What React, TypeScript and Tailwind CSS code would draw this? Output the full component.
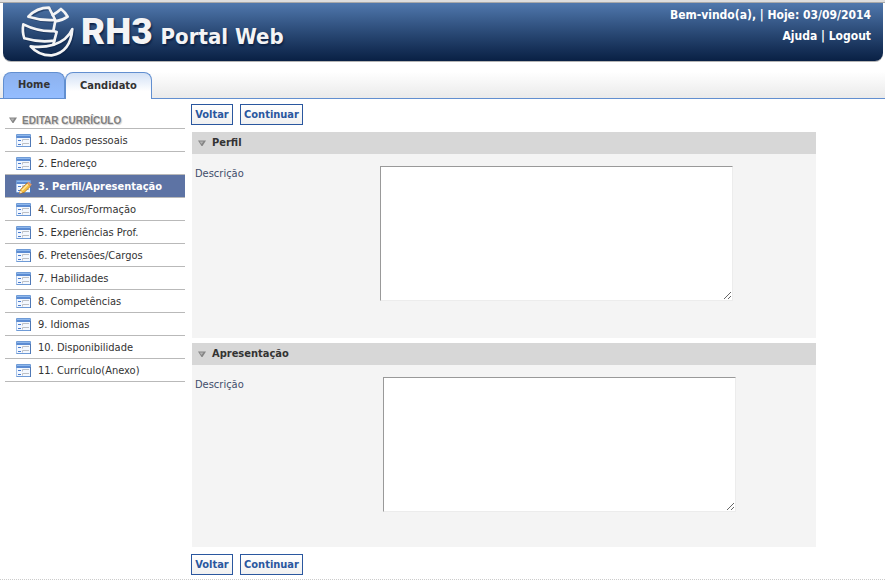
import { useState } from "react";

const sections = [
  "Dados pessoais",
  "Endereço",
  "Perfil/Apresentação",
  "Cursos/Formação",
  "Experiências Prof.",
  "Pretensões/Cargos",
  "Habilidades",
  "Competências",
  "Idiomas",
  "Disponibilidade",
  "Currículo(Anexo)",
];

function GlobeLogo() {
  return (
    <svg className="h-[58px] w-[75px] shrink-0" viewBox="0 9 225 174" fill="none" aria-hidden="true">
      <g stroke="#0b2145" strokeOpacity="0.5" strokeWidth="7" strokeLinejoin="round" transform="translate(4 4)">
        <path d="M55 50 Q80 23 117 23 L136 60 Q96 63 55 50Z" />
        <path d="M40 73 Q84 95 130 93 M40 73 Q36 95 43 115 Q86 128 133 122" />
        <path d="M187 87 Q172 121 131 134 Q98 144 62 139 Q86 167 125 166 Q182 157 187 87Z" />
      </g>
      <g stroke="#f4f4f5" strokeWidth="8" strokeLinejoin="round" strokeLinecap="round">
        <path d="M55 50 Q80 23 117 23 L136 60 Q96 63 55 50Z" />
        <path d="M128 45 Q141 38 153 27 Q165 36 173 50 Q158 61 136 64" />
        <path d="M136 62 L130 93 L140 96 L133 122 Q86 128 43 115 Q36 95 40 73 Q84 95 130 93" />
        <path d="M187 87 Q172 121 131 134 Q98 144 62 139 Q86 167 125 166 Q182 157 187 87Z" />
        <path d="M133 122 L130 134" />
      </g>
    </svg>
  );
}

function FormIcon({ editing = false }: { editing?: boolean }) {
  return (
    <svg className="h-[14px] w-4 shrink-0" viewBox="0 0 16 14" aria-hidden="true">
      <rect x="0" y="0" width="15" height="13" rx="1" fill="#6f9bd6" />
      <rect x="1" y="4" width="13" height="8" fill="#f3f8ff" />
      <rect x="0" y="4" width="1" height="8" fill="#a9c4e8" />
      <rect x="1" y="1" width="13" height="1" fill="#8fb8ec" />
      <rect x="1" y="2" width="13" height="2" fill="#5b8bd2" />
      <rect x="14" y="3" width="1" height="10" fill="#4f78b5" />
      <path d="M2 6.500h3M2 10.500h3" stroke="#4a7ccf" />
      <path d="M13 5.500H6.500v2M13 9.500H6.500v2" stroke="#bcbfc4" fill="none" />
      {editing && (
        <g>
          <path d="M3.500 13.500l1.200-4 6.500-6.500 3.500 3-6.500 6.400z" fill="#f6c143" stroke="#a86b1c" strokeWidth="0.800" />
          <path d="M6 10.200l6-6" stroke="#ffe9a3" strokeWidth="1.500" />
          <path d="M3.500 13.500l.9-2.900 2 2z" fill="#f8e2c0" />
          <path d="M11.200 3l1.300-1.300 3.300 2.900-1.200 1.400z" fill="#e79a68" />
        </g>
      )}
    </svg>
  );
}

function Arrow() {
  return (
    <svg className="h-[6px] w-2 shrink-0" viewBox="0 0 8 6" aria-hidden="true">
      <path d="M0 .5h8L4.500 6h-1z" fill="#858585" />
      <path d="M1.500 1.500h4L3.500 4z" fill="#b5b5b5" />
    </svg>
  );
}

function Actions() {
  const style =
    "h-[21px] border border-[#2a579f] bg-linear-to-b from-white to-[#f0f0f0] px-[3px] pt-px text-[11px] leading-[18px] font-bold text-[#2a579f]";
  return (
    <div className="flex gap-[7px]">
      <button type="button" className={style + " min-w-[42px]"}>Voltar</button>
      <button type="button" className={style + " min-w-[63px]"}>Continuar</button>
    </div>
  );
}

function Panel({ id, title, labelClass, bodyClass }: { id: string; title: string; labelClass: string; bodyClass: string }) {
  const [open, setOpen] = useState(true);
  return (
    <section className="bg-[#f4f4f4]">
      <h2 className="bg-[#d7d7d7]">
        <button
          type="button"
          aria-expanded={open}
          onClick={() => setOpen(!open)}
          className="flex h-[22px] w-full items-center gap-[6px] px-[6px] text-[11px] font-bold text-[#333]"
        >
          <Arrow />
          {title}
        </button>
      </h2>
      {open && (
        <div className={"flex pt-3 " + bodyClass}>
          <label htmlFor={id} className={"shrink-0 pl-[3px] text-[#3f4d6b] " + labelClass}>Descrição</label>
          <textarea
            id={id}
            className="h-[135px] w-[353px] border border-t-[#999] border-r-[#ececec] border-b-[#ececec] border-l-[#999] bg-white p-[2px] outline-none"
          />
        </div>
      )}
    </section>
  );
}

export default function App() {
  return (
    <div className="bg-white font-['DejaVu_Sans_Condensed','DejaVu_Sans',sans-serif] text-[11px] text-[#333]">
      <div className="h-[3px] border-b border-[#a9a9a9] bg-[#dedede]" />
      <header className="mr-[2px] ml-[3px] flex h-[58px] justify-between rounded-b-lg bg-linear-to-b from-[#5078ad] to-[#092044] pr-3 pl-[7px] shadow-[0_1px_0_#b5b5b5]">
        <div className="flex text-[#f4f4f5]">
          <GlobeLogo />
          <div className="-ml-[4px] flex items-baseline gap-2 [text-shadow:1px_2px_2px_#0b2145]">
            <span className="font-[Roboto,sans-serif] text-[37px] leading-[58px] font-black">RH3</span>
            <span className="text-[22px] font-bold">Portal Web</span>
          </div>
        </div>
        <div className="pt-[2px] text-right text-xs leading-[21px] font-bold text-white">
          <p>Bem-vindo(a), | Hoje: 03/09/2014</p>
          <p>
            <a href="#ajuda">Ajuda</a> | <a href="#logout">Logout</a>
          </p>
        </div>
      </header>

      <nav className="mt-1 flex h-[34px] items-end border-b border-[#628fd0] bg-linear-to-b from-white from-20% to-[#eaeaea] pl-[3px] font-bold">
        <a href="#home" className="flex h-[26px] items-center rounded-t-lg border border-b-0 border-[#628fd0] bg-linear-to-b from-[#8db2ee] to-[#94bdff] px-[14px]">
          Home
        </a>
        <a href="#candidato" aria-current="page" className="-mb-px flex h-[27px] items-center rounded-t-lg border border-b-0 border-[#628fd0] bg-linear-to-b from-[#d3e1f5] to-white to-70% px-[14px]">
          Candidato
        </a>
      </nav>

      <div className="flex items-start gap-[6px] pt-[5px] pl-[5px]">
        <aside className="w-[180px] shrink-0">
          <h2 className="flex h-[25px] items-center gap-[5px] border-b border-[#b9b9b9] pt-2 pl-1 font-['Liberation_Sans',Arial,sans-serif] text-[10px] font-bold text-[#808080] [text-shadow:1px_1px_1px_#ccc]">
            <Arrow />
            EDITAR CURRÍCULO
          </h2>
          <ul>
            {sections.map((name, i) => (
              <li key={name} className="border-b border-[#b9b9b9]">
                <a
                  href={"#secao-" + (i + 1)}
                  aria-current={i === 2 ? "step" : undefined}
                  className={
                    "flex h-[22px] items-center gap-[6px] pt-[2px] pl-[11px] " +
                    (i === 2 ? "bg-[#5d73a4] font-bold text-white" : "")
                  }
                >
                  <FormIcon editing={i === 2} />
                  <span>{i + 1}. {name}</span>
                </a>
              </li>
            ))}
          </ul>
        </aside>

        <main className="min-w-0 grow">
          <Actions />
          <div className="my-[7px] ml-px flex max-w-[624px] flex-col gap-[5px]">
            <Panel id="perfil" title="Perfil" labelClass="w-[188px]" bodyClass="pb-[37px]" />
            <Panel id="apresentacao" title="Apresentação" labelClass="w-[191px]" bodyClass="pb-[35px]" />
          </div>
          <Actions />
        </main>
      </div>
      <hr className="mt-1 border-t border-dotted border-[#ccc]" />
    </div>
  );
}
